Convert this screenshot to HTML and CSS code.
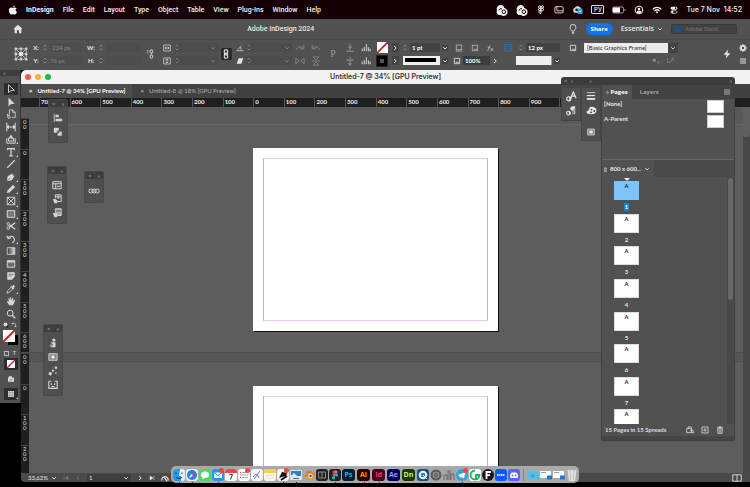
FILE: index.html
```html
<!DOCTYPE html>
<html lang="en">
<head>
<meta charset="utf-8">
<title>Untitled-7 @ 34% [GPU Preview]</title>
<link rel="stylesheet" href="styles.css">
</head>
<body>
<svg class="sprite" aria-hidden="true">
  <symbol id="apple" viewBox="0 0 12 12"><path fill="currentColor" d="M8.3.5C8 2 7 2.900 5.900 2.800 5.900 1.700 7 .7 8.300.5zM6 3.500c.6 0 1.200-.6 2.300-.6.9 0 1.700.5 2.100 1.100-1.900 1.100-1.600 3.700.4 4.500C10.200 10 9.400 11.500 8.400 11.500c-.9 0-1.200-.5-2.200-.5s-1.400.5-2.200.5C2.600 11.500 1 8.700 1 6.500 1 4.200 2.500 3 3.900 3 4.800 3 5.500 3.500 6 3.500z"/></symbol>
  <symbol id="cc" viewBox="0 0 12 12"><path fill="currentColor" d="M4.500 1a4 4 0 0 1 3.800 3A4 4 0 1 1 5 11H3.500A3 3 0 0 1 1 6.500 4 4 0 0 1 4.500 1z"/><circle cx="7.800" cy="7.800" r="1.800" fill="none" stroke="#150006"/><path d="M3 6.500a2 2 0 0 1 3-1.500" fill="none" stroke="#150006"/></symbol>
  <symbol id="figma" viewBox="0 0 12 12"><g fill="none" stroke="currentColor" stroke-width="1.200"><rect x="3" y="1" width="3" height="3" rx="1.500"/><rect x="6" y="1" width="3" height="3" rx="1.500"/><rect x="3" y="4" width="3" height="3" rx="1.500"/><circle cx="7.500" cy="5.500" r="1.500"/><path d="M6 7v3a1.500 1.500 0 1 1-1.500-3z"/></g></symbol>
  <symbol id="screen" viewBox="0 0 12 12"><g fill="none" stroke="currentColor"><rect x="1" y="2" width="10" height="7.500" rx="1.500"/><path d="M3.500 2v5H11"/></g></symbol>
  <symbol id="cloudblue" viewBox="0 0 12 12"><path fill="#ddd" d="M3 9.500a3 3 0 0 1 0-5.500 4 4 0 0 1 7 1.500L7 9.500z"/><circle cx="5" cy="6.500" r="1.500" fill="#222"/><rect x="6.500" y="5" width="5" height="6" rx="1" fill="#28a8e8"/><path d="M8 8h2" stroke="#fff"/></symbol>
  <symbol id="battery" viewBox="0 0 14 12"><rect x=".5" y="3" width="11" height="6" rx="1.500" fill="none" stroke="#999"/><rect x="1" y="3.500" width="7" height="5" fill="#fff"/><path d="M13 5v2" stroke="#999"/></symbol>
  <symbol id="person" viewBox="0 0 12 12"><circle cx="6" cy="6" r="4.600" fill="none" stroke="currentColor" stroke-width="1.200"/><circle cx="6" cy="4.800" r="1.600" fill="currentColor"/><path fill="currentColor" d="M3 9a3 2.500 0 0 1 6 0L6 10.500z"/></symbol>
  <symbol id="wifi" viewBox="0 0 12 12"><path d="M1 5a7 7 0 0 1 10 0M3 7.200a4.300 4.300 0 0 1 6 0" fill="none" stroke="currentColor" stroke-width="1.600"/><path fill="currentColor" d="M4.500 8.500a2 2 0 0 1 3 0L6 10.500z"/></symbol>
  <symbol id="toggles" viewBox="0 0 12 12"><rect x="1" y="1" width="10" height="4.500" rx="2.200" fill="currentColor"/><circle cx="8.500" cy="3.200" r="1.200" fill="#150006"/><rect x="1.500" y="7" width="9" height="4" rx="2" fill="none" stroke="currentColor"/><circle cx="3.500" cy="9" r="1.700" fill="currentColor"/></symbol>
  <symbol id="home" viewBox="0 0 12 12"><path fill="currentColor" d="M6 1l5.500 5H10v5H7.300V7.500H4.700V11H2V6H.5z"/></symbol>
  <symbol id="bulb" viewBox="0 0 12 12"><path fill="none" stroke="currentColor" d="M4.500 8.500C4.500 7 2.500 6.500 2.500 4a3.500 3.500 0 0 1 7 0c0 2.500-2 3-2 4.500zM4.500 10h3M5 11.500h2"/></symbol>
  <symbol id="down" viewBox="0 0 12 12"><path d="M2.500 4.500L6 8l3.500-3.500" fill="none" stroke="currentColor" stroke-width="1.800"/></symbol>
  <symbol id="right" viewBox="0 0 12 12"><path d="M4 2l4.500 4L4 10" fill="none" stroke="currentColor" stroke-width="1.800"/></symbol>
  <symbol id="left" viewBox="0 0 12 12"><path d="M8 2L3.500 6 8 10" fill="none" stroke="currentColor" stroke-width="1.800"/></symbol>
  <symbol id="first" viewBox="0 0 12 12"><path d="M2 2v8M10 2L4 6l6 4z" fill="currentColor" stroke="currentColor"/></symbol>
  <symbol id="last" viewBox="0 0 12 12"><path d="M10 2v8M2 2l6 4-6 4z" fill="currentColor" stroke="currentColor"/></symbol>
  <symbol id="step" viewBox="0 0 12 12"><path d="M3 4l3-3 3 3M3 8l3 3 3-3" fill="none" stroke="currentColor" stroke-width="1.400"/></symbol>
  <symbol id="refpoint" viewBox="0 0 12 12"><g fill="none" stroke="#bbb" stroke-width=".8"><path d="M1.500 1.500h9v9h-9zM1.500 6h9M6 1.500v9M1.500 1.500l9 9M10.500 1.500l-9 9"/></g><g fill="#ccc"><path d="M.5.500h2v2h-2zM5 .5h2v2H5zM9.500.5h2v2h-2zM.5 5h2v2h-2zM9.500 5h2v2h-2zM.5 9.500h2v2h-2zM5 9.500h2v2H5zM9.500 9.500h2v2h-2z"/></g><path fill="#fff" d="M4.500 4.500h3v3h-3z"/></symbol>
  <symbol id="chain" viewBox="0 0 12 12"><g fill="none" stroke="currentColor" stroke-width="1.300"><rect x="4" y="1" width="4" height="5" rx="1.500"/><rect x="4" y="6" width="4" height="5" rx="1.500"/><path d="M6 4v4"/></g></symbol>
  <symbol id="unchain" viewBox="0 0 12 12"><g fill="none" stroke="currentColor" stroke-width="1.300"><path d="M5 5V2.500a1.500 1.500 0 0 1 3 0V5M5 7v2.500a1.500 1.500 0 0 0 3 0V7M1 2h2M1 4.500h1.500M6.500 4v4"/></g></symbol>
  <symbol id="scalex" viewBox="0 0 12 12"><path d="M1 1.500h10v9H1zM3 6h6M4.500 4L3 6l1.500 2M7.500 4L9 6 7.500 8" fill="none" stroke="currentColor"/></symbol>
  <symbol id="scaley" viewBox="0 0 12 12"><path d="M1 1.500h10v9H1zM6 3v6M4 4.500L6 3l2 1.500M4 7.500L6 9l2-1.500" fill="none" stroke="currentColor"/></symbol>
  <symbol id="angle" viewBox="0 0 12 12"><path d="M11 10H1l7-7M6 4.500A6 6 0 0 1 7.500 10" fill="none" stroke="currentColor" stroke-width="1.300"/></symbol>
  <symbol id="shear" viewBox="0 0 12 12"><path d="M4 2h7L8 10H1z" fill="currentColor"/></symbol>
  <symbol id="rotcw" viewBox="0 0 12 12"><path d="M2 8a4 4 0 0 1 7-2M10.500 2.500V7H6.500" fill="none" stroke="currentColor" stroke-width="1.200"/></symbol>
  <symbol id="rotccw" viewBox="0 0 12 12"><path d="M10 8a4 4 0 0 0-7-2M1.500 2.500V7h4" fill="none" stroke="currentColor" stroke-width="1.200"/></symbol>
  <symbol id="fliph" viewBox="0 0 12 12"><path d="M1 2.500v7L5 6zM11 2.500v7L7 6z" fill="none" stroke="currentColor"/></symbol>
  <symbol id="flipv" viewBox="0 0 12 12"><path d="M2.500 1h7L6 5zM2.500 11h7L6 7zM1 6h10" fill="none" stroke="currentColor"/></symbol>
  <symbol id="tree" viewBox="0 0 12 12"><path d="M6 1v8M1.500 10h9M3.500 5h5" fill="none" stroke="currentColor" stroke-width="1.400"/></symbol>
  <symbol id="treedown" viewBox="0 0 12 12"><path d="M6 1v10M1.500 5h9M4 8.500L6 11l2-2.500" fill="none" stroke="currentColor" stroke-width="1.400"/></symbol>
  <symbol id="bars" viewBox="0 0 12 12"><path d="M1.500 10V6.500M4 10V5M6.500 10V1.500M9 10V5M11 10V7" stroke="currentColor" stroke-width="1.500"/></symbol>
  <symbol id="corner" viewBox="0 0 12 12"><path d="M2 1.500h8v7H2zM1 10.500h10" fill="none" stroke="currentColor" stroke-width="1.200"/></symbol>
  <symbol id="square" viewBox="0 0 12 12"><path d="M2 2h8v8H2zM4 8h5" fill="none" stroke="currentColor" stroke-width="1.200"/></symbol>
  <symbol id="fx" viewBox="0 0 12 12"><path d="M2 10.500C5 10 3.500 2 6.500 2M2.500 5h4M7 6l4 4.500M11 6l-4 4.500" fill="none" stroke="currentColor" stroke-width="1.200"/></symbol>
  <symbol id="wrap" viewBox="0 0 12 12"><path d="M1 2h10M1 4.500h4M7.500 4.500H11M1 7h4M7.500 7H11M1 9.500h10" stroke="currentColor" stroke-width="1.300"/></symbol>
  <symbol id="clear" viewBox="0 0 12 12"><path d="M1 3h5v4H1z" fill="currentColor"/><path d="M7 8l4-1-2 4" fill="none" stroke="currentColor"/></symbol>
  <symbol id="undo" viewBox="0 0 12 12"><path d="M2 2v6h4l4-5M8 2h3v4" fill="none" stroke="currentColor" stroke-width="1.200"/></symbol>
  <symbol id="bolt" viewBox="0 0 12 12"><path d="M7.500.5L2 7h3.500L4.500 11.500 10 5H6.500z" fill="currentColor"/></symbol>
  <symbol id="gear" viewBox="0 0 12 12"><circle cx="6" cy="6" r="3.200" fill="none" stroke="currentColor" stroke-width="2.400"/><path d="M6 0v2M6 10v2M0 6h2M10 6h2M2 2l1 1M10 2L9 3M2 10l1-1M10 10L9 9" stroke="currentColor" stroke-width="1.500"/></symbol>
  <symbol id="menu" viewBox="0 0 12 12"><path d="M1.500 3h9M1.500 6h9M1.500 9h9" stroke="currentColor" stroke-width="1.400"/></symbol>
  <symbol id="none" viewBox="0 0 12 12"><path fill="#fff" d="M0 0h12v12H0z"/><path d="M0 12L12 0" stroke="#c8202c" stroke-width="2"/></symbol>
  <symbol id="arrow" viewBox="0 0 12 12"><path d="M3 1v9.500L5.500 8 10 7.500z" fill="none" stroke="currentColor" stroke-width="1.100"/></symbol>
  <symbol id="arrowfull" viewBox="0 0 12 12"><path d="M3 .5v11L6 8.500l4.500-.5z" fill="currentColor"/></symbol>
  <symbol id="pagetool" viewBox="0 0 12 12"><path d="M4 8V1h4l3 3v6H7M8 1v3h3M1.500 6l4 4.500-3 .5z" fill="none" stroke="currentColor"/></symbol>
  <symbol id="gaptool" viewBox="0 0 12 12"><path d="M1 1v10M11 1v10M1 6h10M3.500 4L1.500 6l2 2M8.500 4l2 2-2 2" fill="none" stroke="currentColor" stroke-width="1.300"/></symbol>
  <symbol id="collector" viewBox="0 0 12 12"><path d="M1 5v6h10V5M3 5h6v3.500H3z" fill="none" stroke="currentColor" stroke-width="1.200"/><path d="M6 .5l2.500 4h-5z" fill="currentColor"/></symbol>
  <symbol id="typetool" viewBox="0 0 12 12"><path d="M2 4V2h8v2M6 2v8.500M4 10.500h4" fill="none" stroke="currentColor" stroke-width="1.500"/></symbol>
  <symbol id="line" viewBox="0 0 12 12"><path d="M1.500 10.500l9-9" stroke="currentColor" stroke-width="1.300"/></symbol>
  <symbol id="pen" viewBox="0 0 12 12"><path d="M1 11l1-6 5-3 3 3-3 5z" fill="currentColor"/><path d="M8 1l3 3M1 11l4-4" stroke="#777"/></symbol>
  <symbol id="pencil" viewBox="0 0 12 12"><path d="M1 11l1-3.500L8.500 1 11 3.500 4.500 10z" fill="currentColor"/></symbol>
  <symbol id="frame" viewBox="0 0 12 12"><path d="M1.500 1.500h9v9h-9zM1.500 1.500l9 9M10.500 1.500l-9 9" fill="none" stroke="currentColor" stroke-width="1.100"/></symbol>
  <symbol id="rect" viewBox="0 0 12 12"><path d="M1.500 2h9v8h-9z" fill="#777" stroke="currentColor" stroke-width="1.200"/></symbol>
  <symbol id="scissors" viewBox="0 0 12 12"><path d="M11 2L4 7.500M11 10L4 4.500" stroke="currentColor" stroke-width="1.400"/><circle cx="2.700" cy="3.500" r="1.600" fill="none" stroke="currentColor"/><circle cx="2.700" cy="8.500" r="1.600" fill="none" stroke="currentColor"/></symbol>
  <symbol id="rotate" viewBox="0 0 12 12"><path d="M2.500 5a4 4 0 1 1 5 5.500M1 2l1.500 3.500L6 4.500" fill="none" stroke="currentColor" stroke-width="1.300"/></symbol>
  <linearGradient id="fade"><stop stop-color="#333"/><stop offset="1" stop-color="#ddd"/></linearGradient>
  <symbol id="gradient" viewBox="0 0 12 12"><path d="M1.500 2h9v8h-9z" fill="url(#fade)" stroke="currentColor"/></symbol>
  <symbol id="feather" viewBox="0 0 12 12"><path d="M1.500 2h9v8h-9z" fill="#777" stroke="currentColor"/><path d="M1.500 3h9" stroke="currentColor" stroke-width="2"/><path d="M3 7h1M5.500 7h1M8 7h1" stroke="#333"/></symbol>
  <symbol id="note" viewBox="0 0 12 12"><path d="M1.500 1.500h9V7L7 10.500H1.500z" fill="currentColor"/><path d="M3 4h6M3 6h4" stroke="#666"/></symbol>
  <symbol id="dropper" viewBox="0 0 12 12"><path d="M1 11l1-3 4-4 2 2-4 4z" fill="none" stroke="currentColor"/><path d="M5.500 3l1-1L7.500 3 9 1l2 2-2 1.500 1 1-1 1z" fill="currentColor"/></symbol>
  <symbol id="hand" viewBox="0 0 12 12"><path d="M4 11L1 7l1-1 1.500 1L2.700 3l1-.5L5 5.500 5 1.500h1.200l.5 4L8 2l1 .4-.6 3.800L10 4.500l1 .5-2 5-1 1z" fill="currentColor"/></symbol>
  <symbol id="zoom" viewBox="0 0 12 12"><circle cx="5" cy="5" r="3.500" fill="none" stroke="currentColor" stroke-width="1.200"/><path d="M7.500 7.500l3.500 3.500" stroke="currentColor" stroke-width="1.600"/></symbol>
  <symbol id="defaults" viewBox="0 0 12 12"><path d="M5 5h6v6H5z" fill="#222"/><circle cx="5" cy="5" r="4" fill="currentColor"/></symbol>
  <symbol id="swap" viewBox="0 0 12 12"><path d="M2 3h5a2 2 0 0 1 2 2v5M4 1L2 3l2 2M7 8l2 2 2-2" fill="none" stroke="currentColor" stroke-width="1.400"/></symbol>
  <symbol id="modes" viewBox="0 0 12 12"><path d="M1.500 4h9v6h-9zM1.500 4l2-2h4v2" fill="currentColor"/><path d="M4 7h4" stroke="#555"/></symbol>
  <symbol id="screenmode" viewBox="0 0 12 12"><path d="M1.500 1.500h9v9h-9z" fill="currentColor"/><path d="M1.500 4h9M1.500 8h9M4 1.500v9M8 1.500v9" stroke="#777" stroke-width=".7"/></symbol>
  <symbol id="align" viewBox="0 0 12 12"><path d="M1.500 1v10" stroke="currentColor"/><path d="M3 2h4v3H3zM3 7h8v3H3z" fill="currentColor"/></symbol>
  <symbol id="pathfinder" viewBox="0 0 12 12"><path d="M1 1h6v6H1z" fill="currentColor"/><path d="M5 5h6v6H5z" fill="currentColor" stroke="#4c4c4c"/><path d="M5.500 5.500h2v2h-2z" fill="#4c4c4c"/></symbol>
  <symbol id="table" viewBox="0 0 12 12"><path d="M1 2h10v8.500H1zM1 4.500h10M4.500 4.500v6M6 7.500h4" fill="none" stroke="currentColor" stroke-width="1.200"/></symbol>
  <symbol id="tstyle" viewBox="0 0 12 12"><path d="M4 5V1h7v8H7M4 3.500h7M7.500 1v5" fill="none" stroke="currentColor" stroke-width="1.200"/><path d="M1 6h3l3 2-1 3H3z" fill="currentColor"/></symbol>
  <symbol id="cstyle" viewBox="0 0 12 12"><path d="M4 5V1h7v8H7z" fill="#aaa" stroke="currentColor" stroke-width="1.200"/><path d="M4 3.500h7" stroke="#555"/><path d="M1 6h3l3 2-1 3H3z" fill="currentColor"/></symbol>
  <symbol id="links" viewBox="0 0 16 12"><g fill="none" stroke="currentColor" stroke-width="1.300"><rect x="1" y="3.500" width="6" height="5" rx="2.500"/><rect x="5" y="3.500" width="6" height="5" rx="2.500"/><rect x="9" y="3.500" width="6" height="5" rx="2.500"/></g></symbol>
  <symbol id="ink" viewBox="0 0 12 12"><circle cx="7" cy="2.500" r="2" fill="currentColor"/><path d="M3 5h6v6H3l3-2.500z" fill="currentColor"/><circle cx="3.500" cy="9" r="1.500" fill="#999"/></symbol>
  <symbol id="picture" viewBox="0 0 12 12"><path d="M1 2h10v8H1z" fill="#8a8a8a" stroke="currentColor"/><circle cx="6" cy="6" r="2" fill="#eee"/></symbol>
  <symbol id="dots" viewBox="0 0 12 12"><g fill="currentColor"><circle cx="2.700" cy="9.300" r="2"/><circle cx="6" cy="5.500" r="1.400"/><circle cx="9.500" cy="2" r="1.500"/><circle cx="9.500" cy="8.500" r="1"/></g></symbol>
  <symbol id="face" viewBox="0 0 12 12"><path d="M1 1.500h3M8 1.500h3V10H1V1.500M4 4v2M8 4v2M4 8.500l2-1 2 1" fill="none" stroke="currentColor" stroke-width="1.300"/></symbol>
  <symbol id="charstyle" viewBox="0 0 12 12"><path d="M5 8l3-7 3 7M6 5.500h4" fill="none" stroke="currentColor" stroke-width="1.300"/><circle cx="3" cy="8.500" r="2.200" fill="none" stroke="currentColor" stroke-width="1.300"/><path d="M3 6l3 2-2 3z" fill="currentColor"/></symbol>
  <symbol id="parstyle" viewBox="0 0 12 12"><path d="M8.500 1v9M10.500 1v9M11 1H7.500a2 2 0 0 0 0 4h1" fill="currentColor" stroke="currentColor"/><circle cx="3" cy="8.500" r="2.200" fill="none" stroke="currentColor" stroke-width="1.300"/><path d="M3 6l3 2-2 3z" fill="currentColor"/></symbol>
  <symbol id="lines" viewBox="0 0 12 12"><path d="M1 2h10" stroke="currentColor"/><path d="M1 5.500h10" stroke="currentColor" stroke-width="1.500"/><path d="M1 9.500h10" stroke="currentColor" stroke-width="2.200"/></symbol>
  <symbol id="palette" viewBox="0 0 12 12"><path d="M6 2c3 0 5.500 1.500 5.500 4S9 10 6 10 .5 9 .5 7.500 3 7 3 5.500 4 2 6 2z" fill="currentColor"/><circle cx="6" cy="5" r="1" fill="#444"/><circle cx="9" cy="6.500" r="1" fill="#444"/><circle cx="5.500" cy="8" r="1" fill="#444"/></symbol>
  <symbol id="swatches" viewBox="0 0 12 12"><path d="M1 1.500h10v9H1z" fill="#888" stroke="currentColor"/><path d="M3.500 4h5v4h-5z" fill="currentColor"/></symbol>
  <symbol id="editpage" viewBox="0 0 12 12"><path d="M3 4V1.500h5V4M1 4h7v6H1zM8 6h2l1.500 4H8z" fill="none" stroke="currentColor" stroke-width="1.200"/></symbol>
  <symbol id="addpage" viewBox="0 0 12 12"><path d="M1.500 1.500h9v9h-9zM6 3.500v5M3.500 6h5" fill="none" stroke="currentColor" stroke-width="1.200"/></symbol>
  <symbol id="trash" viewBox="0 0 12 12"><path d="M1.500 2.500h9M4.500 1h3M2.500 4h7l-.5 7H3z" fill="none" stroke="currentColor" stroke-width="1.200"/><path d="M4.500 5v5M6 5v5M7.500 5v5" stroke="currentColor" stroke-width=".8"/></symbol>
  <symbol id="preflight" viewBox="0 0 12 12"><path d="M1.500 10a4.700 4.700 0 1 1 9 0M5 5l4 6" fill="none" stroke="currentColor" stroke-width="1.800"/></symbol>
  <symbol id="split" viewBox="0 0 14 12"><path d="M1 1.500h12v9H1zM7 1.500v9" fill="none" stroke="currentColor" stroke-width="1.200"/></symbol>
</svg>

<header class="menubar">
  <nav class="menus">
    <svg class="i10"><use href="#apple"/></svg>
    <a href="#" class="app">InDesign</a><a href="#">File</a><a href="#">Edit</a><a href="#">Layout</a><a href="#">Type</a><a href="#">Object</a><a href="#">Table</a><a href="#">View</a><a href="#">Plug-Ins</a><a href="#">Window</a><a href="#">Help</a>
  </nav>
  <div class="tray">
    <svg class="i12"><use href="#cc"/></svg>
    <svg class="i12"><use href="#cc"/></svg>
    <svg class="i10"><use href="#figma"/></svg>
    <svg class="i10"><use href="#screen"/></svg>
    <svg class="i11"><use href="#cloudblue"/></svg>
    <span class="lang">РУ</span>
    <svg class="i14"><use href="#battery"/></svg>
    <svg class="i10"><use href="#person"/></svg>
    <svg class="i10"><use href="#wifi"/></svg>
    <svg class="i8"><use href="#toggles"/></svg>
    <time>Tue 7 Nov&nbsp; 14:52</time>
  </div>
</header>

<div class="appbar">
  <button class="home" aria-label="Home"><svg class="i10"><use href="#home"/></svg></button>
  <span class="apptitle">Adobe InDesign 2024</span>
  <div class="appright">
    <svg class="i10"><use href="#bulb"/></svg>
    <button class="share">Share</button>
    <button class="essentials">Essentials <svg class="i6"><use href="#down"/></svg></button>
    <label class="stock"><span class="stockicon"></span><input type="text" aria-label="Adobe Stock" placeholder="Adobe Stock"></label>
  </div>
</div>

<div class="control">
  <svg class="i14 tall"><use href="#refpoint"/></svg>
  <label for="fx-x">X:</label><label for="fx-y">Y:</label>
  <span class="field dim"><svg class="st"><use href="#step"/></svg><input id="fx-x" value="-234 px"></span>
  <span class="field dim"><svg class="st"><use href="#step"/></svg><input id="fx-y" value="76 px"></span>
  <label for="fx-w">W:</label><label for="fx-h">H:</label>
  <span class="field dim"><svg class="st"><use href="#step"/></svg><input id="fx-w"></span>
  <span class="field dim"><svg class="st"><use href="#step"/></svg><input id="fx-h"></span>
  <svg class="i10 tall soft"><use href="#unchain"/></svg>
  <svg class="i8"><use href="#scalex"/></svg><svg class="i8"><use href="#scaley"/></svg>
  <span class="field pale"><svg class="st"><use href="#step"/></svg><input aria-label="Scale X"><svg class="i6"><use href="#down"/></svg></span>
  <span class="field pale"><svg class="st"><use href="#step"/></svg><input aria-label="Scale Y"><svg class="i6"><use href="#down"/></svg></span>
  <button class="tall locked" aria-label="Constrain"><svg class="i10"><use href="#chain"/></svg></button>
  <svg class="i8 soft"><use href="#angle"/></svg><svg class="i8"><use href="#shear"/></svg>
  <span class="field pale"><svg class="st"><use href="#step"/></svg><input aria-label="Rotation"><svg class="i6"><use href="#down"/></svg></span>
  <span class="field pale"><svg class="st"><use href="#step"/></svg><input aria-label="Shear"><svg class="i6"><use href="#down"/></svg></span>
  <svg class="i10 faint"><use href="#rotcw"/></svg><svg class="i10 faint"><use href="#fliph"/></svg>
  <svg class="i10 faint"><use href="#rotccw"/></svg><svg class="i10 faint"><use href="#flipv"/></svg>
  <span class="tall glyph">P</span>
  <svg class="i10 faint"><use href="#tree"/></svg><svg class="i10 faint"><use href="#treedown"/></svg>
  <svg class="i10 soft"><use href="#bars"/></svg><svg class="i10 soft"><use href="#bars"/></svg>
  <svg class="i11"><use href="#none"/></svg><span class="stroke"></span>
  <button class="mini" aria-label="Fill options"><svg class="i6"><use href="#right"/></svg></button>
  <button class="mini" aria-label="Stroke options"><svg class="i6"><use href="#right"/></svg></button>
  <span class="field dark"><svg class="st"><use href="#step"/></svg><input aria-label="Stroke weight" value="1 pt"><svg class="i6 drop"><use href="#down"/></svg></span>
  <span class="field line"><span class="sample"></span><svg class="i6 drop"><use href="#down"/></svg></span>
  <span class="trio"><svg class="i8"><use href="#corner"/></svg><svg class="i8"><use href="#square"/></svg><svg class="i8"><use href="#fx"/></svg></span>
  <span class="field opacity"><svg class="i8"><use href="#square"/></svg><input aria-label="Opacity" value="100%"><svg class="i6"><use href="#right"/></svg></span>
  <svg class="i10 blue"><use href="#wrap"/></svg><span></span>
  <span class="field dark"><svg class="st"><use href="#step"/></svg><input aria-label="Corner size" value="12 px"></span>
  <span class="field cornerstyle"><input aria-label="Corner shape"><svg class="i6 drop"><use href="#down"/></svg></span>
  <svg class="i8"><use href="#square"/></svg><span></span>
  <span class="field objstyle"><select aria-label="Object style"><option>[Basic Graphics Frame]</option></select><svg class="i6 drop"><use href="#down"/></svg></span>
  <span class="duo"><svg class="i8"><use href="#clear"/></svg><svg class="i8"><use href="#undo"/></svg></span>
  <svg class="i10 tall quick"><use href="#bolt"/></svg>
  <svg class="i8"><use href="#gear"/></svg><svg class="i8"><use href="#menu"/></svg>
</div>

<main class="work">
  <aside class="tools">
    <div class="grip">»</div>
    <div class="toolgrid">
      <button class="on" aria-label="Selection"><svg><use href="#arrow"/></svg></button>
      <button aria-label="Direct selection"><svg><use href="#arrowfull"/></svg></button>
      <button aria-label="Page"><svg><use href="#pagetool"/></svg></button>
      <button aria-label="Gap"><svg><use href="#gaptool"/></svg></button>
      <button class="more" aria-label="Content collector"><svg><use href="#collector"/></svg></button>
      <button class="more" aria-label="Type"><svg><use href="#typetool"/></svg></button>
      <button aria-label="Line"><svg><use href="#line"/></svg></button>
      <button class="more" aria-label="Pen"><svg><use href="#pen"/></svg></button>
      <button class="more" aria-label="Pencil"><svg><use href="#pencil"/></svg></button>
      <button class="more" aria-label="Frame"><svg><use href="#frame"/></svg></button>
      <button class="more" aria-label="Rectangle"><svg><use href="#rect"/></svg></button>
      <button aria-label="Scissors"><svg><use href="#scissors"/></svg></button>
      <button class="more" aria-label="Rotate"><svg><use href="#rotate"/></svg></button>
      <button aria-label="Gradient swatch"><svg><use href="#gradient"/></svg></button>
      <button aria-label="Gradient feather"><svg><use href="#feather"/></svg></button>
      <button aria-label="Note"><svg><use href="#note"/></svg></button>
      <button class="more" aria-label="Eyedropper"><svg><use href="#dropper"/></svg></button>
      <button aria-label="Hand"><svg><use href="#hand"/></svg></button>
      <button aria-label="Zoom"><svg><use href="#zoom"/></svg></button>
    </div>
    <div class="pair"><svg class="i6"><use href="#defaults"/></svg><svg class="i6"><use href="#swap"/></svg></div>
    <div class="fillstroke"><svg class="i12"><use href="#none"/></svg></div>
    <div class="pair format"><span class="box"></span><span>T</span></div>
    <button class="slot on" aria-label="Apply none"><svg class="i8"><use href="#none"/></svg></button>
    <button class="slot" aria-label="View options"><svg class="i8"><use href="#modes"/></svg></button>
    <button class="slot on more" aria-label="Screen mode"><svg class="i8"><use href="#screenmode"/></svg></button>
  </aside>

  <section class="window">
    <div class="titlebar">
      <span class="lights"><i class="red"></i><i class="amber"></i><i class="green"></i></span>
      <span>Untitled-7 @ 34% [GPU Preview]</span>
    </div>
    <div class="doctabs">
      <a href="#" class="current"><b>×</b>Untitled-7 @ 34% [GPU Preview]</a>
      <a href="#"><b>×</b>Untitled-8 @ 18% [GPU Preview]</a>
    </div>
    <div class="hruler"><div class="hcells">
      <span>700</span><span>600</span><span>500</span><span>400</span><span>300</span><span>200</span><span>100</span><span>0</span><span>100</span><span>200</span><span>300</span><span>400</span><span>500</span><span>600</span><span>700</span><span>800</span><span>900</span><span>1000</span><span>1100</span><span>1200</span><span>1300</span><span>1400</span><span>1500</span>
    </div></div>
    <div class="view">
      <div class="spreads">
        <div class="spread opening">
          <div class="vruler first"><span>00</span><span>0</span><span>100</span><span>200</span><span>300</span><span>400</span><span>500</span><span>600</span></div>
          <div class="page"><div class="margins"></div></div>
        </div>
        <div class="spread next">
          <div class="vruler"><span>00</span><span>0</span><span>100</span><span>200</span></div>
          <div class="page"><div class="margins"></div></div>
        </div>
      </div>
      <div class="scroll"><i></i></div>
    </div>
    <footer class="status">
      <button class="zoomlevel">33,62% <svg class="i6"><use href="#down"/></svg></button>
      <button aria-label="First page" class="off"><svg class="i6"><use href="#first"/></svg></button>
      <button aria-label="Previous page" class="off"><svg class="i6"><use href="#left"/></svg></button>
      <span class="pageno"><input aria-label="Page" value="1"><svg class="i6"><use href="#down"/></svg></span>
      <button aria-label="Next page"><svg class="i6"><use href="#right"/></svg></button>
      <button aria-label="Last page"><svg class="i6"><use href="#last"/></svg></button>
      <button aria-label="Preflight"><svg class="i8"><use href="#preflight"/></svg></button>
      <button aria-label="Split view" class="split"><svg class="i10"><use href="#split"/></svg></button>
    </footer>
  </section>
</main>

<div class="float align"><div class="fhead">×<span>»</span></div><svg class="i10"><use href="#align"/></svg><svg class="i10"><use href="#pathfinder"/></svg></div>
<div class="float tables"><div class="fhead">×<span>»</span></div><svg class="i10"><use href="#table"/></svg><svg class="i10"><use href="#tstyle"/></svg><svg class="i10"><use href="#cstyle"/></svg></div>
<div class="float linked"><div class="fhead">×<span>»</span></div><svg class="i12"><use href="#links"/></svg></div>
<div class="float effects"><div class="fhead">×<span>»</span></div><svg class="i10"><use href="#ink"/></svg><svg class="i10"><use href="#picture"/></svg><svg class="i10"><use href="#dots"/></svg><svg class="i10"><use href="#face"/></svg></div>

<aside class="dockpanels">
  <div class="dphead"><span>× &nbsp;»</span><span>»</span><span class="end">»</span></div>
  <div class="strip"><svg class="i11"><use href="#charstyle"/></svg><svg class="i10"><use href="#parstyle"/></svg></div>
  <div class="strip"><svg class="i10"><use href="#lines"/></svg><svg class="i11"><use href="#palette"/></svg><svg class="i8 apart"><use href="#swatches"/></svg></div>
  <div class="pages">
    <div class="ptabs"><a href="#" class="current"><small>◊</small> Pages</a><a href="#">Layers</a><svg class="i8"><use href="#menu"/></svg></div>
    <div class="parents">
      <div><span>[None]</span><i></i></div>
      <div><span>A-Parent</span><i></i></div>
    </div>
    <div class="size"><button><small>▯</small> 800 x 600... <svg class="i6"><use href="#down"/></svg></button></div>
    <div class="listwrap">
      <ol class="list">
        <li class="sel"><i>A</i><b>1</b></li><li><i>A</i><b>2</b></li><li><i>A</i><b>3</b></li><li><i>A</i><b>4</b></li><li><i>A</i><b>5</b></li><li><i>A</i><b>6</b></li><li><i>A</i><b>7</b></li><li><i>A</i></li>
      </ol>
      <div class="pscroll"><i></i></div>
    </div>
    <div class="pfoot"><span>15 Pages in 15 Spreads</span><button aria-label="Edit page size"><svg class="i8"><use href="#editpage"/></svg></button><button aria-label="New page"><svg class="i8"><use href="#addpage"/></svg></button><button aria-label="Delete page"><svg class="i8"><use href="#trash"/></svg></button></div>
    <div class="handle"></div>
  </div>
</aside>

<nav class="dock">
  <span class="run"><svg viewBox="0 0 12 12"><rect width="12" height="12" rx="3" fill="#e8f2fb"/><path d="M0 3a3 3 0 0 1 3-3h4L6 7h2v5H3a3 3 0 0 1-3-3z" fill="#1f9cf0"/><path d="M3 3.500v1.500M9 3.500v1.500M3 8.500q3 2 6 0" stroke="#134" fill="none"/></svg></span>
  <span class="run"><svg viewBox="0 0 12 12"><rect width="12" height="12" rx="3" fill="#eee"/><circle cx="6" cy="6" r="5" fill="#1d83e8"/><path d="M9 3L7 7 5 5z" fill="#f44"/><path d="M3 9l2-4 2 2z" fill="#fff"/></svg></span>
  <span><svg viewBox="0 0 12 12"><rect width="12" height="12" rx="3" fill="#4cd964"/><ellipse cx="6" cy="5.800" rx="4" ry="3.300" fill="#fff"/><path d="M3 10l1-3 2 2z" fill="#fff"/></svg></span>
  <span class="run badge"><svg viewBox="0 0 12 12"><rect width="12" height="12" rx="3" fill="#2196f3"/><path d="M2 3.500h8v5.500H2z" fill="#fff"/><path d="M2 3.500l4 3 4-3" stroke="#2196f3" fill="none"/></svg></span>
  <span><svg viewBox="0 0 12 12"><rect width="12" height="12" rx="3" fill="#fff"/><path d="M0 3a3 3 0 0 1 3-3h6a3 3 0 0 1 3 3v1H0z" fill="#f0443c"/><path d="M4.500 5.500h3L5.500 10.500" stroke="#333" fill="none"/></svg></span>
  <span class="badge"><svg viewBox="0 0 12 12"><rect width="12" height="12" rx="3" fill="#fff"/><path d="M4 3.500h6M4 6h6M4 8.500h6" stroke="#aaa"/><path d="M2 3.500h1M2 6h1M2 8.500h1" stroke="#e33"/></svg></span>
  <span><svg viewBox="0 0 12 12"><rect width="12" height="12" rx="3" fill="#f6f6f6"/><path d="M3 10L9 2M2 8q4-6 6 1" stroke="#6b76d8" fill="none"/></svg></span>
  <span><svg viewBox="0 0 12 12"><rect width="12" height="12" rx="3" fill="#fff9e4"/><path d="M0 3a3 3 0 0 1 3-3h6a3 3 0 0 1 3 3v1H0z" fill="#f7cf4a"/><path d="M2 6.500h8M2 9h8" stroke="#ddd"/></svg></span>
  <span class="run badge"><svg viewBox="0 0 12 12"><rect width="12" height="12" rx="3" fill="#f3f3f3"/><path d="M2 9l3-6 5 1-1 3-4 1z" fill="#111"/><path d="M4 11l6-4" stroke="#111" stroke-width="2"/></svg></span>
  <span class="run"><svg viewBox="0 0 12 12"><rect y="1" width="12" height="10" rx="1" fill="#d8e7f2"/><path d="M1 2h10v5H1z" fill="#2f80c2"/><path d="M1 7l3-3 3 3z" fill="#eee"/><path d="M3 9.500h6" stroke="#666"/></svg></span>
  <span><svg viewBox="0 0 12 12"><path d="M1 8l6-5h-4M7 2.500L12 6" stroke="#ea7600" stroke-width="1.500" fill="none"/><circle cx="7.500" cy="7" r="3.500" fill="#f08a16"/><circle cx="7.500" cy="7" r="2.200" fill="#fff"/><circle cx="7.500" cy="7" r="1.300" fill="#235a9c"/></svg></span>
  <span><svg viewBox="0 0 12 12"><rect width="12" height="12" rx="3" fill="#222"/><path d="M2.500 3h7v6h-7zM6 3v6" stroke="#888" fill="none"/></svg></span>
  <span class="run"><svg viewBox="0 0 12 12"><rect width="12" height="12" rx="3" fill="#222"/><path d="M6 1.500H5a1.500 1.500 0 0 0 0 3h1z" fill="#f24e1e"/><path d="M6 1.500h1a1.500 1.500 0 0 1 0 3H6z" fill="#ff7262"/><path d="M6 4.500H5a1.500 1.500 0 0 0 0 3h1z" fill="#a259ff"/><circle cx="7.500" cy="6" r="1.500" fill="#1abcfe"/><path d="M6 7.500H5A1.500 1.500 0 1 0 6 9z" fill="#0acf83"/></svg></span>
  <span class="ad ps">Ps</span>
  <span class="ad ai run">Ai</span>
  <span class="ad id run">Id</span>
  <span class="ad ae">Ae</span>
  <span class="ad dn">Dn</span>
  <span><svg viewBox="0 0 12 12"><rect width="12" height="12" rx="3" fill="#16517c"/><circle cx="6" cy="6" r="4.300" fill="#eaf6ff"/><circle cx="6" cy="6" r="2.300" fill="#2387d0"/><path d="M6 6l4 4" stroke="#fff"/></svg></span>
  <span><svg viewBox="0 0 12 12"><circle cx="6" cy="6" r="5.500" fill="#555"/><circle cx="6" cy="6" r="3" fill="none" stroke="#999"/><path d="M6 1v10M1 6h10M2.500 2.500l7 7M9.500 2.500l-7 7" stroke="#777"/></svg></span>
  <span><svg viewBox="0 0 12 12"><rect width="12" height="12" rx="2" fill="#a5a5a5"/><path d="M1 11V6h3v5M5 11V2h2v9M8 11V5h3v6" stroke="#666" fill="none"/></svg></span>
  <span class="run badge"><svg viewBox="0 0 12 12"><circle cx="6" cy="6" r="6" fill="#2ca5e0"/><path d="M2 6l7.500-3L8 9.500 5.500 8 5 9z" fill="#fff"/></svg></span>
  <span><svg viewBox="0 0 12 12"><rect width="12" height="12" rx="3" fill="#fff"/><path d="M6 1.500a4.500 4.500 0 1 0 4.500 4.500H7v4" fill="none" stroke="#10b35a" stroke-width="1.800"/></svg></span>
  <span><svg viewBox="0 0 12 12"><circle cx="6" cy="6" r="6" fill="#1c1517"/><path d="M4.500 10V3H9M4.500 6.200h3.500" fill="none" stroke="#fff" stroke-width="1.800"/></svg></span>
  <span><svg viewBox="0 0 12 12"><rect width="12" height="12" rx="3" fill="#0b5cff"/><path d="M2 6h8" stroke="#cfe0ff" stroke-width="2" stroke-dasharray="1.500 .5"/></svg></span>
  <span><svg viewBox="0 0 12 12"><rect width="12" height="12" rx="3" fill="#5865f2"/><path d="M2 8.500Q2 5 3.500 3.500h5Q10 5 10 8.500L8 9H4z" fill="#fff"/><circle cx="4.500" cy="6.500" r=".9" fill="#5865f2"/><circle cx="7.500" cy="6.500" r=".9" fill="#5865f2"/></svg></span>
  <i class="sep"></i>
  <span><svg viewBox="0 0 12 12"><path d="M0 2h5l1 1h6v7.500H0z" fill="#56bdeb"/><circle cx="6" cy="6.700" r="1.700" fill="#3b9ccc"/></svg></span>
  <span><svg viewBox="0 0 12 12"><path d="M0 2h11v7H0z" fill="#fff"/><path d="M1 3h5v1H1z" fill="#999"/><path d="M7 6.500h5v4H7z" fill="#2178c7"/></svg></span>
  <span><svg viewBox="0 0 12 12"><path d="M0 2h11v7H0z" fill="#fff"/><path d="M1 3h5v1H1z" fill="#999"/><path d="M7 6.500h5v4H7z" fill="#2178c7"/></svg></span>
  <span><svg viewBox="0 0 12 12"><path d="M1.500 1h9L9 12H3z" fill="#e4e4e4"/><path d="M4 2l.7 9M8 2l-.7 9M1.500 1h9" stroke="#bbb"/></svg></span>
</nav>
</body>
</html>
```
FILE: styles.css
```css
* { box-sizing: border-box; }
html, body { height: 100%; }
body {
  margin: 0;
  background: #000;
  color: #e6e6e6;
  font: 6px/8px Lato, "Open Sans", sans-serif;
  display: flex;
  flex-direction: column;
  overflow: hidden;
  position: relative;
}
a { color: inherit; text-decoration: none; }
button, input, select {
  font: inherit;
  color: inherit;
  background: none;
  border: 0;
  padding: 0;
  margin: 0;
  min-width: 0;
  appearance: none;
}
button { display: flex; align-items: center; justify-content: center; }
svg { display: block; flex: none; }
.sprite { position: absolute; width: 0; height: 0; }
.i6 { width: 6px; height: 6px; }
.i8 { width: 8px; height: 8px; }
.i10 { width: 10px; height: 10px; }
.i11 { width: 11px; height: 11px; }
.i12 { width: 12px; height: 12px; }
.i14 { width: 14px; height: 14px; }

/* system menu bar */
.menubar {
  flex: none;
  height: 19px;
  background: #150006;
  color: #f2f2f2;
  display: flex;
  justify-content: space-between;
  align-items: center;
  padding: 0 8px;
  font: 500 7px/10px Inter, sans-serif;
}
.menus { display: flex; align-items: center; gap: 9px; font-family: Roboto, sans-serif; }
.menus .app { font-weight: 700; margin-left: -1px; }
.tray { display: flex; align-items: center; gap: 8px; }
.lang {
  border: 1px solid #ddd;
  border-radius: 1px;
  width: 13px;
  font-size: 6px;
  line-height: 7px;
  text-align: center;
}

/* application bar */
.appbar {
  flex: none;
  height: 21px;
  background: #515151;
  border-bottom: 1px solid #484848;
  display: grid;
  grid-template-columns: 33% 1fr auto;
  align-items: center;
  padding-right: 13px;
}
.home { width: 10px; margin-left: 13px; }
.apptitle { font: 500 7px/10px Roboto, sans-serif; margin-left: 4px; }
.appright { display: flex; align-items: center; gap: 8px; }
.share {
  width: 27px;
  height: 12px;
  border-radius: 6px;
  background: #1473e6;
  color: #fff;
  font: 700 6px/8px "Open Sans", sans-serif;
}
.essentials { font: 600 7px/10px "Open Sans", sans-serif; gap: 3px; }
.stock {
  width: 66px;
  height: 10px;
  background: #424242;
  border: 1px solid #3a3a3a;
  border-radius: 2px;
  display: flex;
  align-items: center;
  gap: 3px;
  padding: 0 2px;
}
.stock input { width: 46px; }
.stock input::placeholder { color: #777; opacity: 1; }
.stockicon { width: 8px; height: 6px; background: #24507c; flex: none; }

/* control strip */
.control {
  flex: none;
  height: 30px;
  background: #515151;
  padding: 1px 0 0 12px;
  display: grid;
  grid-auto-flow: column;
  grid-template-rows: 13px 13px;
  grid-template-columns: 18px 12px 42px 14px 45px 16px 15px 44px 16px 12px 46px 16px 16px 18px 16px 16px 16px 10px 50px 50px 16px 46px 22px 94px 1fr 14px;
  align-items: center;
  justify-items: center;
}
.control label { font-weight: 700; }
.tall { grid-row: span 2; }
.soft { color: #bdbdbd; }
.faint { color: #858585; }
.blue { color: #3273b0; }
.quick { justify-self: end; margin-right: 4px; }
.st { width: 6px; height: 9px; color: #9a9a9a; }
.field {
  display: flex;
  align-items: center;
  gap: 2px;
  width: 100%;
  padding-right: 2px;
  height: 9px;
}
.field input { flex: 1; height: 9px; }
.dim input { color: #858585; background: #4d4d4d; }
.pale { background: #4c4c4c; color: #888; }
.dark { color: #fff; padding-left: 2px; }
.dark input { background: #424242; padding-left: 2px; font-weight: 700; }
.drop { background: #424242; }
.locked { background: #2b2b2b; width: 11px; height: 12px; border-radius: 1px; }
.glyph { font: 10px/12px "Liberation Serif", serif; color: #999; }
.stroke { width: 10px; height: 10px; border: 3px solid #000; background: #555; outline: 1px solid #222; }
.mini { width: 7px; height: 9px; background: #444; }
.sample {
  flex: 1;
  height: 9px;
  background: #000;
  border: solid #eee;
  border-width: 2px 4px 3px 2px;
}
.line { padding-left: 3px; }
.trio { display: flex; width: 100%; justify-content: space-between; padding: 0 6px 0 5px; color: #bbb; }
.opacity { padding-left: 3px; }
.opacity input { background: #3c3c3c; color: #fff; font-weight: 700; padding-left: 2px; }
.cornerstyle input { background: #f0f0f0; border-right: 1px solid #999; }
.objstyle { gap: 0; padding: 0; }
.objstyle select {
  flex: 1;
  height: 10px;
  background: #ececec;
  color: #222;
  padding-left: 3px;
}
.objstyle .drop { width: 10px; height: 10px; padding: 2px; }
.duo { display: flex; gap: 6px; justify-self: end; margin-right: 4px; color: #888; }

/* workspace */
.work { flex: 1; min-height: 0; display: flex; padding-bottom: 5px; }
.tools {
  flex: none;
  align-self: flex-start;
  width: 21px;
  background: #515151;
  border-right: 1px solid #333;
  color: #d8d8d8;
}
.grip { height: 13px; line-height: 6px; padding-left: 3px; color: #999; background: linear-gradient(#3e3e3e 6px, #515151 6px); }
.toolgrid { display: grid; grid-template-rows: repeat(19, 1fr); height: 237px; }
.toolgrid svg { width: 10px; height: 10px; }
.tools button { position: relative; width: 14px; margin-left: 4px; }
.tools .on { background: #2d2d2d; }
.more::after {
  content: "";
  position: absolute;
  right: 0;
  bottom: 1px;
  border: 1px solid;
  border-color: transparent #ccc #ccc transparent;
}
.pair { display: flex; justify-content: space-between; align-items: center; height: 10px; padding: 0 3px; }
.fillstroke { height: 18px; padding-left: 3px; position: relative; display: flex; }
.fillstroke::before { content: ""; position: absolute; left: 8px; top: 5px; width: 10px; height: 10px; background: #000; }
.fillstroke svg { position: relative; }
.format { padding: 0 4px; }
.box { width: 5px; height: 5px; border: 1px solid #bbb; }
.slot { height: 12px; margin-bottom: 3px; }

.window {
  flex: 1;
  min-width: 0;
  display: flex;
  flex-direction: column;
  border-radius: 5px 0 0 4px;
  overflow: hidden;
}
.titlebar {
  flex: none;
  height: 14px;
  background: #f2f2f2;
  color: #333;
  display: flex;
  align-items: center;
  justify-content: center;
  position: relative;
  font: 600 7px/10px Inter, sans-serif;
}
.lights { position: absolute; left: 4px; display: flex; gap: 4px; }
.lights i { width: 6px; height: 6px; border-radius: 50%; }
.red { background: #f05a50; }
.amber { background: #f6b42c; }
.green { background: #22b84a; }
.doctabs { flex: none; height: 14px; background: #414141; display: flex; color: #b0b0b0; }
.doctabs a { display: flex; align-items: center; gap: 5px; padding: 0 7px 0 8px; }
.doctabs b { font-weight: 700; }
.doctabs .current { background: #4d4d4d; color: #fff; font-weight: 700; }
.hruler { flex: none; height: 9px; background: #1f1f1f; padding-left: 18px; overflow: hidden; }
.hcells { width: 704px; display: grid; grid-template-columns: repeat(23, 1fr); }
.hcells span { border-left: 1px solid #555; padding-left: 1px; height: 9px; color: #eee; font-weight: 700; }
.view { flex: 1; min-height: 0; display: flex; }
.spreads { flex: 1; min-width: 0; overflow: hidden; background: #5d5d5d; }
.spread { display: flex; height: 250px; }
.opening {
  height: 246px;
  overflow: hidden;
  border-bottom: 1px solid #4e4e4e;
  background: linear-gradient(#595959 17px, #676767 17px, #676767 18px, #5d5d5d 18px);
}
.first { margin-top: 11px; height: 245px; }
.vruler {
  flex: none;
  width: 8px;
  background: #1f1f1f;
  display: grid;
  grid-auto-rows: 1fr;
  overflow: hidden;
  align-self: flex-start;
}
.vruler span {
  width: 8px;
  padding: 0 2px;
  border-top: 1px solid #444;
  line-height: 5px;
  word-break: break-all;
  color: #ddd;
}
.next { background: linear-gradient(#555 10px, #646464 10px, #646464 11px, #5d5d5d 11px); }
.next .vruler { height: 122px; }
.page {
  width: 245px;
  height: 183px;
  margin: 41px 0 0 31%;
  background: #fff;
  box-shadow: 1px 1px 0 #111;
  padding: 10px;
}
.next .page { margin-top: 33px; }
.margins { height: 100%; border: 1px solid #eccaf0; border-left-color: #b9aef2; border-right-color: #b9aef2; }
.scroll { flex: none; width: 7px; background: #484848; }
.scroll i { display: block; height: 30px; background: #606060; border-radius: 0 0 3px 3px; }
.status {
  flex: none;
  height: 9px;
  background: #4a4a4a;
  display: flex;
  align-items: center;
  gap: 6px;
  padding: 0 8px 0 7px;
}
.zoomlevel { gap: 3px; }
.off { color: #777; }
.pageno { display: flex; align-items: center; width: 44px; background: #3e3e3e; height: 8px; padding: 0 2px; }
.pageno input { flex: 1; height: 8px; }
.split { margin-left: auto; }

/* floating panels on the pasteboard */
.float {
  position: absolute;
  width: 20px;
  background: #4f4f4f;
  border: 1px solid #484848;
  border-radius: 2px;
  display: flex;
  flex-direction: column;
  align-items: center;
  gap: 4px;
  padding-bottom: 5px;
  color: #d5d5d5;
}
.fhead {
  align-self: stretch;
  background: #3d3d3d;
  display: flex;
  justify-content: space-between;
  padding: 0 3px;
  line-height: 7px;
  margin-bottom: 2px;
  color: #aaa;
}
.align { left: 48px; top: 99px; }
.tables { left: 47px; top: 166px; }
.linked { left: 84px; top: 171px; }
.effects { left: 43px; top: 324px; }

.dockpanels {
  position: absolute;
  right: 15px;
  top: 77px;
  width: 174px;
  display: grid;
  grid-template-columns: 20px 20px 1fr;
  align-items: start;
}
.dphead {
  grid-column: 1 / -1;
  background: #3c3c3c;
  color: #999;
  display: flex;
  gap: 16px;
  padding: 0 3px;
  height: 8px;
  line-height: 7px;
  border-radius: 3px 3px 0 0;
}
.end { margin-left: auto; }
.strip {
  background: #4f4f4f;
  border: 1px solid #454545;
  border-top-width: 3px;
  display: flex;
  flex-direction: column;
  align-items: center;
  gap: 4px;
  padding: 3px 0 4px;
}
.apart { margin-top: 8px; }
.pages { background: #515151; border: 1px solid #424242; border-top: 0; }
.ptabs { height: 14px; background: #424242; display: flex; align-items: center; padding-right: 3px; color: #b5b5b5; }
.ptabs a { padding: 0 4px; line-height: 14px; font: 600 6px/14px "Open Sans", sans-serif; }
.ptabs .current { background: #515151; color: #fff; font-weight: 700; margin-right: 4px; }
.ptabs small { font-size: 5px; color: #aaa; }
.ptabs svg { margin-left: auto; }
.parents { height: 61px; border-bottom: 1px solid #666; padding-top: 1px; font-weight: 700; }
.parents div { display: flex; justify-content: space-between; padding: 0 10px 0 2px; margin-bottom: 2px; }
.parents i { width: 17px; height: 13px; background: #fff; border: 1px solid #ccc; }
.size { height: 17px; background: #4a4a4a; font-weight: 700; }
.size button { height: 17px; padding: 0 4px 0 2px; gap: 3px; background: #515151; }
.listwrap { height: 247px; overflow: hidden; display: flex; justify-content: space-between; }
.list {
  list-style: none;
  margin: 4px 0 0 12px;
  padding: 0;
  height: 261px;
  display: grid;
  grid-template-rows: repeat(8, 1fr);
}
.list li { display: flex; flex-direction: column; align-items: center; gap: 3px; position: relative; }
.list i {
  width: 25px;
  height: 19px;
  background: #fff;
  border: 1px solid #ddd;
  color: #222;
  text-align: center;
  font: 600 6px/8px "Open Sans", sans-serif;
}
.list b { font-weight: 700; line-height: 8px; padding: 0 1px; }
.sel i { background: #7cc4fb; border-color: #7cc4fb; }
.sel b { background: #1583e0; color: #fff; }
.sel::before {
  content: "";
  position: absolute;
  top: -3px;
  border: 3px solid transparent;
  border-top-color: #eee;
  border-bottom: 0;
}
.pscroll { width: 7px; background: #494949; }
.pscroll i { display: block; width: 5px; height: 122px; margin: 1px; background: #686868; border-radius: 3px; }
.pfoot { height: 12px; display: flex; align-items: center; gap: 7px; padding: 0 10px 0 3px; font-weight: 700; color: #ddd; }
.pfoot span { margin-right: auto; }
.handle { height: 4px; background: #454545; }

/* application dock */
.dock {
  position: absolute;
  left: 50%;
  bottom: 4px;
  transform: translateX(-50%);
  width: 408px;
  height: 17px;
  padding: 0 1px;
  background: #a9a9ab;
  border-radius: 5px;
  display: flex;
  align-items: center;
}
.dock span { flex: 1; position: relative; display: flex; justify-content: center; }
.dock svg { width: 12px; height: 12px; }
.sep { width: 6px; height: 12px; border-left: 1px solid #858585; margin-left: 3px; margin-right: -3px; }
.badge::before {
  content: "";
  position: absolute;
  right: 0;
  top: -1px;
  width: 5px;
  height: 5px;
  border-radius: 50%;
  background: #f0453f;
}
.run::after {
  content: "";
  position: absolute;
  left: 50%;
  bottom: -2px;
  width: 1px;
  height: 1px;
  background: #222;
}
.dock .ad {
  height: 12px;
  margin: 0 1px;
  border-radius: 3px;
  font: 700 7px/12px "Open Sans", sans-serif;
}
.ps { background: #001e36; color: #31a8ff; }
.ai { background: #330000; color: #ff9a00; }
.id { background: #49021f; color: #ff3366; }
.ae { background: #00005b; color: #9999ff; }
.dn { background: #1b3a00; color: #c8f26a; }
```
